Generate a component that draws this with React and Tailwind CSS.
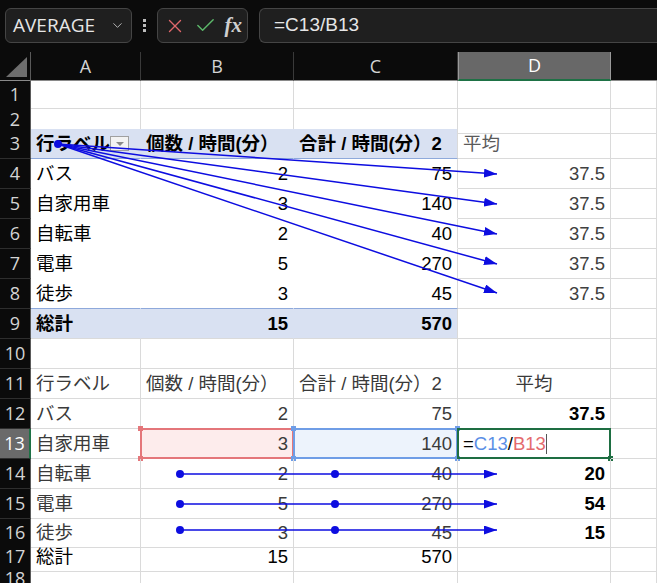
import React from "react";
import { ChevronDown, X, Check } from "lucide-react";

const GRID = "grid grid-cols-[31px_110px_153px_164px_153px_1fr]";
const FONT = { fontFamily: '"Liberation Sans", "Noto Sans CJK JP", sans-serif' };

const PB = "bg-[#d9e1f2]";

function RowHead({ n, active }) {
  return (
    <div
      className={`flex items-center justify-center text-[18px] border-b border-[#2e2e2e] ${
        active ? "bg-[#6a6a6a] text-white border-r-2 border-r-[#1e7145]" : "bg-[#0b0b0b] text-[#d4d4d4] border-r border-r-[#5a5a5a]"
      }`}
      style={{ fontFamily: '"Open Sans", "Liberation Sans", sans-serif' }}
    >
      {n}
    </div>
  );
}

function Cell({ className = "", children, right, center }) {
  return (
    <div
      className={`relative flex items-center px-[5px] whitespace-nowrap text-[18.5px] border-r border-b border-[#dadada] ${
        right ? "justify-end" : center ? "justify-center" : "justify-start"
      } ${className}`}
    >
      {children}
    </div>
  );
}

function Row({ n, h, active, children }) {
  return (
    <div className={`${GRID} ${h}`}>
      <RowHead n={n} active={active} />
      {children}
    </div>
  );
}

function Handle({ pos, color }) {
  return <span className={`absolute w-[5px] h-[5px] ${color} ${pos}`} />;
}

function TraceArrows() {
  const blue = "#0d0de0";
  const fan = [174, 204, 234, 264, 293];
  const flat = [474, 504, 530];
  return (
    <svg className="absolute left-0 top-0 pointer-events-none" width="657" height="583">
      <defs>
        <marker id="ah" viewBox="0 0 13 9" refX="13" refY="4.5" markerWidth="13" markerHeight="9" markerUnits="userSpaceOnUse" orient="auto">
          <path d="M0,0 L13,4.5 L0,9 z" fill={blue} />
        </marker>
      </defs>
      {fan.map((y) => (
        <line key={y} x1="58" y1="144" x2="497" y2={y} stroke={blue} strokeWidth="1.5" markerEnd="url(#ah)" />
      ))}
      <circle cx="58" cy="144" r="4" fill={blue} />
      {flat.map((y) => (
        <g key={y}>
          <line x1="180" y1={y} x2="497" y2={y} stroke={blue} strokeWidth="1.5" markerEnd="url(#ah)" />
          <circle cx="180" cy={y} r="4" fill={blue} />
          <circle cx="335" cy={y} r="4" fill={blue} />
        </g>
      ))}
    </svg>
  );
}

export default function App() {
  return (
    <div className="relative w-[657px] h-[583px] overflow-hidden bg-[#0b0b0b]" style={FONT}>
      {/* formula bar */}
      <div className="flex items-start h-[52px] pt-[8px] pl-[5px] gap-[11px]" style={{ fontFamily: '"Open Sans", "Liberation Sans", sans-serif' }}>
        <div className="flex items-center justify-between w-[127px] h-[35px] rounded-md border border-[#454545] bg-[#1f1f1f] pl-[7px] pr-[6px]">
          <span className="text-[19px] text-[#e6e6e6] leading-none">AVERAGE</span>
          <ChevronDown size={15} strokeWidth={1.5} className="text-[#bdbdbd]" />
        </div>
        <div className="flex flex-col items-center justify-center gap-[2px] h-[35px] w-[3px]">
          <span className="w-[3px] h-[3px] bg-[#bdbdbd]" />
          <span className="w-[3px] h-[3px] bg-[#bdbdbd]" />
          <span className="w-[3px] h-[3px] bg-[#bdbdbd]" />
        </div>
        <div className="flex items-center justify-between w-[91px] h-[35px] rounded-md border border-[#454545] bg-[#1f1f1f] pl-[6px] pr-[5px]">
          <X size={22} strokeWidth={1.5} className="text-[#e0676b]" />
          <Check size={23} strokeWidth={1.5} className="text-[#5cb86a]" />
          <span className="text-[21px] italic font-semibold text-[#cfcfcf] leading-none" style={{ fontFamily: '"Liberation Serif", serif' }}>
            fx
          </span>
        </div>
        <div className="flex items-center flex-1 h-[35px] rounded-l-md border border-r-0 border-[#454545] bg-[#1f1f1f] pl-[14px]">
          <span className="text-[19px] text-[#e6e6e6]" style={{ fontFamily: '"Liberation Sans", sans-serif' }}>
            =C13/B13
          </span>
        </div>
      </div>

      {/* column headers */}
      <div className={`${GRID} h-[29px] text-[18px]`} style={{ fontFamily: '"Open Sans", "Liberation Sans", sans-serif' }}>
        <div className="relative border-r border-[#5a5a5a] border-b border-b-[#8a8a8a]">
          <span className="absolute right-[3px] bottom-[3px] w-0 h-0 border-l-[21px] border-l-transparent border-b-[20px] border-b-[#6e6e6e]" />
        </div>
        {["A", "B", "C"].map((c) => (
          <div key={c} className="flex items-center justify-center text-[#d4d4d4] border-r border-[#3a3a3a] border-b border-b-[#8a8a8a]">
            {c}
          </div>
        ))}
        <div className="flex items-center justify-center text-white bg-[#686868] border-x border-[#9a9a9a] border-b-2 border-b-[#1e7145]">D</div>
        <div className="border-b border-b-[#8a8a8a]" />
      </div>

      {/* sheet */}
      <div className="bg-white">
        <Row n="1" h="h-[25px]">
          <Cell /><Cell /><Cell /><Cell /><Cell />
        </Row>
        <Row n="2" h="h-[23px]">
          <Cell /><Cell /><Cell /><Cell /><Cell />
        </Row>
        <Row n="3" h="h-[30px]">
          <Cell className={`${PB} border-r-transparent border-b-[#8ea9db] font-bold text-black justify-between pr-[1px]`}>
            <span>行ラベル</span>
            <span className="flex items-center justify-center w-[19px] h-[15px] border border-[#a0a0a0] bg-[#f3f3f3]">
              <span className="w-0 h-0 border-x-[4px] border-x-transparent border-t-[4px] border-t-[#8a8a8a]" />
            </span>
          </Cell>
          <Cell className={`${PB} border-r-transparent border-b-[#8ea9db] font-bold text-black`}>個数 / 時間(分）</Cell>
          <Cell className={`${PB} border-b-[#8ea9db] font-bold text-black`}>合計 / 時間(分）2</Cell>
          <Cell className="text-[#5a5a5a]">平均</Cell>
          <Cell />
        </Row>
        {[
          ["4", "バス", "2", "75"],
          ["5", "自家用車", "3", "140"],
          ["6", "自転車", "2", "40"],
          ["7", "電車", "5", "270"],
          ["8", "徒歩", "3", "45"],
        ].map(([n, a, b, c]) => {
          const bottom = n === "8" ? "border-b-[#8ea9db]" : "border-b-transparent";
          return (
            <Row key={n} n={n} h="h-[30px]">
              <Cell className={`border-r-transparent ${bottom} text-black`}>{a}</Cell>
              <Cell right className={`border-r-transparent ${bottom} text-black`}>{b}</Cell>
              <Cell right className={`${bottom} text-black`}>{c}</Cell>
              <Cell right className="text-[#404040]">37.5</Cell>
              <Cell />
            </Row>
          );
        })}
        <Row n="9" h="h-[30px]">
          <Cell className={`${PB} border-r-transparent font-bold text-black`}>総計</Cell>
          <Cell right className={`${PB} border-r-transparent font-bold text-black`}>15</Cell>
          <Cell right className={`${PB} font-bold text-black`}>570</Cell>
          <Cell /><Cell />
        </Row>
        <Row n="10" h="h-[30px]">
          <Cell /><Cell /><Cell /><Cell /><Cell />
        </Row>
        <Row n="11" h="h-[30px]">
          <Cell className="text-[#3a3a3a]">行ラベル</Cell>
          <Cell className="text-[#3a3a3a]">個数 / 時間(分）</Cell>
          <Cell className="text-[#3a3a3a]">合計 / 時間(分）2</Cell>
          <Cell center className="text-[#3a3a3a]">平均</Cell>
          <Cell />
        </Row>
        <Row n="12" h="h-[30px]">
          <Cell className="text-[#3a3a3a]">バス</Cell>
          <Cell right className="text-[#3a3a3a]">2</Cell>
          <Cell right className="text-[#3a3a3a]">75</Cell>
          <Cell right className="font-bold text-black">37.5</Cell>
          <Cell />
        </Row>
        <Row n="13" h="h-[30px]" active>
          <Cell className="text-[#3a3a3a]">自家用車</Cell>
          <Cell right className="bg-[#fdecec] text-[#3a3a3a]">
            <span className="absolute -inset-[1px] border-2 border-[#e4767a]" />
            <Handle color="bg-[#e4767a]" pos="-left-[3px] -top-[3px]" />
            <Handle color="bg-[#e4767a]" pos="-right-[3px] -top-[3px]" />
            <Handle color="bg-[#e4767a]" pos="-left-[3px] -bottom-[3px]" />
            <Handle color="bg-[#e4767a]" pos="-right-[3px] -bottom-[3px]" />
            3
          </Cell>
          <Cell right className="bg-[#edf3fc] text-[#3a3a3a]">
            <span className="absolute -inset-[1px] border-2 border-[#6f9de6]" />
            <Handle color="bg-[#6f9de6]" pos="-left-[3px] -top-[3px]" />
            <Handle color="bg-[#6f9de6]" pos="-right-[3px] -top-[3px]" />
            <Handle color="bg-[#6f9de6]" pos="-left-[3px] -bottom-[3px]" />
            <Handle color="bg-[#6f9de6]" pos="-right-[3px] -bottom-[3px]" />
            140
          </Cell>
          <Cell className="text-black">
            <span className="absolute -inset-[1px] border-2 border-[#1e6e42]" />
            <Handle color="bg-[#1e6e42]" pos="-right-[3px] -bottom-[3px]" />
            <span>=</span>
            <span className="text-[#5b8fe6]">C13</span>
            <span>/</span>
            <span className="text-[#e46a6e]">B13</span>
            <span className="w-px h-[20px] bg-[#555]" />
          </Cell>
          <Cell />
        </Row>
        {[
          ["14", "自転車", "2", "40", "20", "h-[30px]"],
          ["15", "電車", "5", "270", "54", "h-[30px]"],
          ["16", "徒歩", "3", "45", "15", "h-[24px]"],
        ].map(([n, a, b, c, d, h]) => (
          <Row key={n} n={n} h={h}>
            <Cell className="text-[#3a3a3a]">{a}</Cell>
            <Cell right className="text-[#3a3a3a]">{b}</Cell>
            <Cell right className="text-[#3a3a3a]">{c}</Cell>
            <Cell right className="font-bold text-black">{d}</Cell>
            <Cell />
          </Row>
        ))}
        <Row n="17" h="h-[22px]">
          <Cell className="text-black">総計</Cell>
          <Cell right className="text-black">15</Cell>
          <Cell right className="text-black">570</Cell>
          <Cell /><Cell />
        </Row>
        <Row n="18" h="h-[18px]">
          <Cell /><Cell /><Cell /><Cell /><Cell />
        </Row>
      </div>

      <TraceArrows />
    </div>
  );
}
